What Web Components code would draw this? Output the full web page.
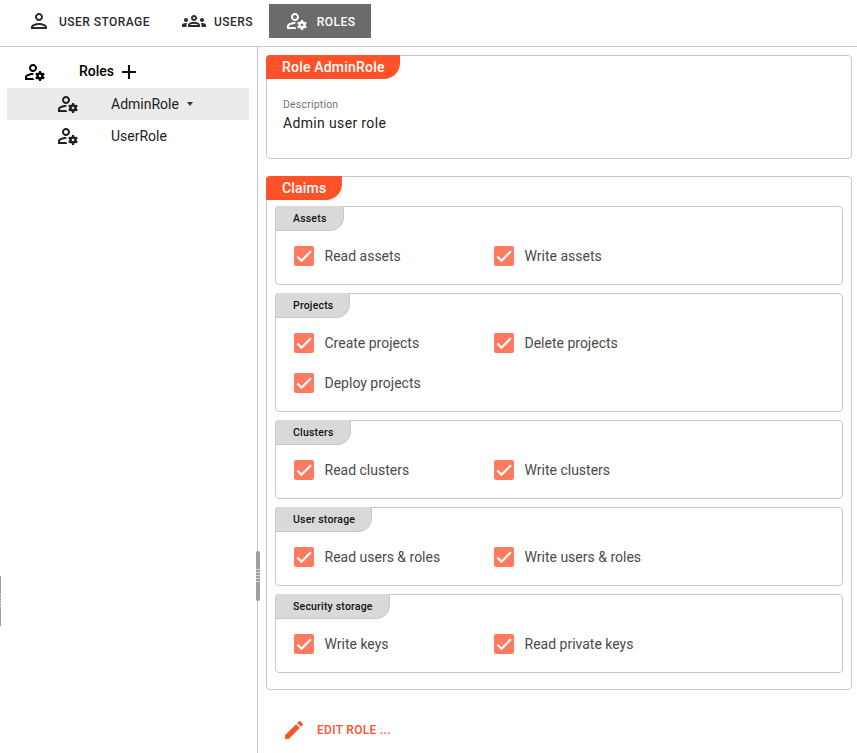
<!DOCTYPE html>
<html>
<head>
<meta charset="utf-8">
<title>Roles</title>
<style>
  html, body { margin: 0; height: 100%; overflow: hidden; background: #fff; font-family: Roboto, "Liberation Sans", sans-serif; }
</style>
</head>
<body>
<role-app></role-app>

<script>
const ICONS = {
  manage: 'M4 18v-.65c0-.34.16-.66.41-.81C6.1 15.53 8.03 15 10 15c.03 0 .05 0 .08.01.1-.7.3-1.37.59-1.98-.22-.02-.44-.03-.67-.03-2.42 0-4.68.67-6.61 1.82-.88.52-1.39 1.5-1.39 2.53V20h9.26c-.42-.6-.75-1.28-.97-2H4zM10 12c2.21 0 4-1.79 4-4s-1.79-4-4-4-4 1.79-4 4 1.79 4 4 4zm0-6c1.1 0 2 .9 2 2s-.9 2-2 2-2-.9-2-2 .9-2 2-2zM20.75 16c0-.22-.03-.42-.06-.63l1.14-1.01-1-1.73-1.45.49c-.32-.27-.68-.48-1.08-.63L18 11h-2l-.3 1.49c-.4.15-.76.36-1.08.63l-1.45-.49-1 1.73 1.14 1.01c-.03.21-.06.41-.06.63s.03.42.06.63l-1.14 1.01 1 1.73 1.45-.49c.32.27.68.48 1.08.63L16 21h2l.3-1.49c.4-.15.76-.36 1.08-.63l1.45.49 1-1.73-1.14-1.01c.03-.21.06-.41.06-.63zM17 17.2c-.66 0-1.2-.54-1.2-1.2s.54-1.2 1.2-1.2 1.2.54 1.2 1.2-.54 1.2-1.2 1.2z',
  person: 'M12 6c1.1 0 2 .9 2 2s-.9 2-2 2-2-.9-2-2 .9-2 2-2m0 10c2.7 0 5.8 1.29 6 2H6c.23-.72 3.31-2 6-2m0-12C9.79 4 8 5.79 8 8s1.79 4 4 4 4-1.79 4-4-1.79-4-4-4zm0 10c-2.67 0-8 1.34-8 4v2h16v-2c0-2.66-5.33-4-8-4z',
  groups: 'M4 13c1.1 0 2-.9 2-2s-.9-2-2-2-2 .9-2 2 .9 2 2 2zm1.13 1.1c-.37-.06-.74-.1-1.13-.1-.99 0-1.93.21-2.78.58C.48 14.9 0 15.62 0 16.43V18h4.5v-1.61c0-.83.23-1.61.63-2.29zM20 13c1.1 0 2-.9 2-2s-.9-2-2-2-2 .9-2 2 .9 2 2 2zm4 3.43c0-.81-.48-1.53-1.22-1.85-.85-.37-1.79-.58-2.78-.58-.39 0-.76.04-1.13.1.4.68.63 1.46.63 2.29V18H24v-1.57zm-7.76-2.78c-1.17-.52-2.61-.9-4.24-.9-1.63 0-3.07.39-4.24.9C6.68 14.13 6 15.21 6 16.39V18h12v-1.61c0-1.18-.68-2.26-1.76-2.74zM8.07 16c.09-.23.13-.39.91-.69.97-.38 1.99-.56 3.02-.56s2.05.18 3.02.56c.77.3.81.46.91.69H8.07zM12 8c.55 0 1 .45 1 1s-.45 1-1 1-1-.45-1-1 .45-1 1-1m0-2c-1.66 0-3 1.34-3 3s1.34 3 3 3 3-1.34 3-3-1.34-3-3-3z',
  plus: 'M19 13h-6v6h-2v-6H5v-2h6V5h2v6h6v2z',
  pencil: 'M3 17.25V21h3.75L17.81 9.94l-3.75-3.75L3 17.25zM20.71 7.04c.39-.39.39-1.02 0-1.41l-2.34-2.34c-.39-.39-1.02-.39-1.41 0l-1.83 1.83 3.75 3.75 1.83-1.83z'
};

class MatIcon extends HTMLElement {
  connectedCallback() {
    const d = ICONS[this.getAttribute('name')] || '';
    this.attachShadow({ mode: 'open' }).innerHTML = `
      <style>
        :host { display: block; width: 24px; height: 24px; flex: none; }
        svg { display: block; width: 24px; height: 24px; fill: currentColor; }
      </style>
      <svg viewBox="0 0 24 24"><path d="${d}"/></svg>`;
  }
}
customElements.define('mat-icon', MatIcon);

class NavTab extends HTMLElement {
  connectedCallback() {
    const icon = this.getAttribute('icon');
    this.attachShadow({ mode: 'open' }).innerHTML = `
      <style>
        :host { display: flex; align-items: center; height: 34px; color: #2b2b2b; font-size: 12px; font-weight: 500; letter-spacing: .45px; padding: 0 16px; gap: 8px; }
        :host([active]) { background: #6b6b6b; color: #fff; }
        span { padding-top: 1px; }
      </style>
      <mat-icon name="${icon}"></mat-icon><span><slot></slot></span>`;
  }
}
customElements.define('nav-tab', NavTab);

class TreeRow extends HTMLElement {
  connectedCallback() {
    const root = this.hasAttribute('root');
    this.attachShadow({ mode: 'open' }).innerHTML = `
      <style>
        :host { display: flex; align-items: center; height: 32px; padding-left: ${root ? 16 : 49}px; font-size: 14px; color: #212121; }
        :host([selected]) { background: #ebebeb; }
        :host([root]) { height: 33px; font-weight: 500; color: #000; }
        .label { margin-left: 31px; }
        :host([root]) .label { margin-left: 32px; padding-bottom: 1px; }
      </style>
      <mat-icon name="manage"></mat-icon><span class="label"><slot></slot></span><slot name="after"></slot>`;
  }
}
customElements.define('tree-row', TreeRow);

class TitledPanel extends HTMLElement {
  connectedCallback() {
    this.attachShadow({ mode: 'open' }).innerHTML = `
      <style>
        :host { display: block; border: 1px solid #c8c8c8; border-radius: 4px; box-sizing: border-box; }
        .tab { display: table; height: 24px; line-height: 24px; margin: -1px 0 0 -1px; padding: 0 15.5px 0 16px; background: #ff5229; color: #fff; font-size: 14px; font-weight: 500; letter-spacing: .2px; border-radius: 4px 0 16px 0; }
      </style>
      <div class="tab">${this.getAttribute('heading')}</div>
      <slot></slot>`;
  }
}
customElements.define('titled-panel', TitledPanel);

class ClaimGroup extends HTMLElement {
  connectedCallback() {
    this.attachShadow({ mode: 'open' }).innerHTML = `
      <style>
        :host { display: block; border: 1px solid #c8c8c8; border-radius: 4px; box-sizing: border-box; }
        .tab { display: table; line-height: 23px; margin: -1px 0 0 -1px; padding: 1px 16px 0 17px; background: #d9d9d9; color: #111; font-size: 10.5px; font-weight: 500; letter-spacing: .2px; border: 1px solid #c8c8c8; border-top: 0; border-radius: 4px 0 14px 0; }
        .grid { display: grid; grid-template-columns: 200px 200px; grid-auto-rows: 40px; padding: 5px 18px 8px; }
      </style>
      <div class="tab">${this.getAttribute('heading')}</div>
      <div class="grid"><slot></slot></div>`;
  }
}
customElements.define('claim-group', ClaimGroup);

class ClaimCheck extends HTMLElement {
  connectedCallback() {
    this.attachShadow({ mode: 'open' }).innerHTML = `
      <style>
        :host { display: flex; align-items: center; gap: 10.5px; font-size: 14px; color: #4a4a4a; }
        .box { width: 20px; height: 20px; border-radius: 2px; background: #ff7a5f; flex: none; }
        svg { display: block; }
      </style>
      <div class="box"><svg width="20" height="20" viewBox="0 0 24 24"><path d="M4.1 12.7L9 17.6 20.3 6.3" fill="none" stroke="#fff" stroke-width="2.67"/></svg></div>
      <slot></slot>`;
  }
}
customElements.define('claim-check', ClaimCheck);

class RoleApp extends HTMLElement {
  connectedCallback() {
    const group = (name, items) => `
      <claim-group heading="${name}">
        ${items.map(i => `<claim-check>${i}</claim-check>`).join('')}
      </claim-group>`;
    this.attachShadow({ mode: 'open' }).innerHTML = `
      <style>
        :host { display: flex; flex-direction: column; height: 753px; position: relative; overflow: hidden; }
        .topbar { display: flex; align-items: center; flex: none; border-bottom: 1px solid #c8c8c8; padding: 0 0 4px 11px; box-sizing: border-box; height: 47px; }
        .body { flex: 1; display: flex; min-height: 0; }
        .side { width: 258px; flex: none; box-sizing: border-box; border-right: 1px solid #c8c8c8; padding: 8px 8px 0 7px; }
        .caret { width: 0; height: 0; border: 3.5px solid transparent; border-top: 4px solid #333; border-bottom: 0; margin-left: 8.5px; }
        .plus { margin-left: 3px; color: #111; }
        .main { flex: 1; padding: 8px 5px 0 8px; display: flex; flex-direction: column; min-width: 0; }
        .desc { padding: 20px 16px 0; height: 79px; box-sizing: border-box; }
        .desc small { display: block; font-size: 10.5px; letter-spacing: .2px; color: #757575; line-height: 12px; }
        .desc div { font-size: 14px; letter-spacing: .35px; color: #212121; line-height: 20px; margin-top: 2px; }
        .claims { margin-top: 17px; }
        .groups { display: flex; flex-direction: column; gap: 8px; padding: 6px 8px 16px; }
        .edit { display: flex; align-items: center; height: 24px; margin: 28px 0 0 16px; color: #ff5229; font-size: 12px; font-weight: 500; letter-spacing: .3px; gap: 11px; }
        .handle, .handle-left { position: absolute; background: #9e9e9e; height: 50px; }
        .handle { left: 256px; top: 551px; width: 4px; border-radius: 2px; }
        .handle-left { left: 0; top: 576px; width: 1px; }
        .handle i, .handle-left i { display: block; height: 13px; position: relative; top: 18px; background: repeating-linear-gradient(#dcdcdc 0 1px, transparent 1px 3px); }
      </style>
      <div class="topbar">
        <nav-tab icon="person">USER STORAGE</nav-tab>
        <nav-tab icon="groups">USERS</nav-tab>
        <nav-tab icon="manage" active>ROLES</nav-tab>
      </div>
      <div class="body">
        <div class="side">
          <tree-row root>Roles<mat-icon slot="after" class="plus" name="plus"></mat-icon></tree-row>
          <tree-row selected>AdminRole<span slot="after" class="caret"></span></tree-row>
          <tree-row>UserRole</tree-row>
        </div>
        <div class="main">
          <titled-panel heading="Role AdminRole">
            <div class="desc"><small>Description</small><div>Admin user role</div></div>
          </titled-panel>
          <titled-panel class="claims" heading="Claims">
            <div class="groups">
              ${group('Assets', ['Read assets', 'Write assets'])}
              ${group('Projects', ['Create projects', 'Delete projects', 'Deploy projects'])}
              ${group('Clusters', ['Read clusters', 'Write clusters'])}
              ${group('User storage', ['Read users &amp; roles', 'Write users &amp; roles'])}
              ${group('Security storage', ['Write keys', 'Read private keys'])}
            </div>
          </titled-panel>
          <div class="edit"><mat-icon name="pencil"></mat-icon>EDIT ROLE ...</div>
        </div>
      </div>
      <div class="handle"><i></i></div>
      <div class="handle-left"><i></i></div>`;
  }
}
customElements.define('role-app', RoleApp);
</script>
</body>
</html>
